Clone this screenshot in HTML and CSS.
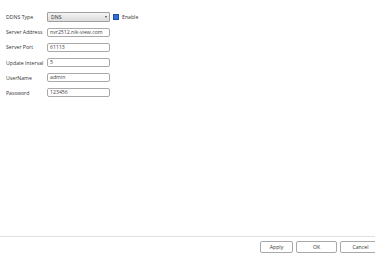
FILE: index.html
```html
<!DOCTYPE html>
<html lang="en">
<head>
    <meta charset="UTF-8">
    <title>DDNS</title>
    <link rel="stylesheet" href="styles.css">
</head>
<body>
    <div class="page">
        <div class="form">
            <div class="row">
                <label class="label">DDNS Type</label>
                <div class="select">
                    <span>DNS</span>
                    <span class="arrow"></span>
                </div>
                <span class="check"></span>
                <span class="check-text">Enable</span>
            </div>
            <div class="row">
                <label class="label">Server Address</label>
                <div class="input">nvr2512.nik-view.com</div>
            </div>
            <div class="row">
                <label class="label">Server Port</label>
                <div class="input">61113</div>
            </div>
            <div class="row">
                <label class="label">Update Interval</label>
                <div class="input">5</div>
            </div>
            <div class="row">
                <label class="label">UserName</label>
                <div class="input">admin</div>
            </div>
            <div class="row">
                <label class="label">Password</label>
                <div class="input">123456</div>
            </div>
        </div>

        <div class="footer">
            <div class="btn apply">Apply</div>
            <div class="btn ok">OK</div>
            <div class="btn cancel">Cancel</div>
        </div>
    </div>
</body>
</html>
```

FILE: styles.css
```css
*{
    padding: 0;
    margin: 0;
    box-sizing: border-box;
}
html, body{
    width: 375px;
    height: 258px;
    overflow: hidden;
    background-color: #fff;
}
body{
    font-family: "Open Sans", "Liberation Sans", Arial, sans-serif;
    font-size: 5.2px;
    color: #333;
}
.page{
    height: 258px;
    display: flex;
    flex-direction: column;
}
/* 表单区 */
.form{
    flex: 1;
    padding: 12px 0 0 6px;
    display: flex;
    flex-direction: column;
    gap: 5.2px;
}
.row{
    height: 10px;
    display: flex;
    align-items: center;
}
.label{
    width: 41px;
    white-space: nowrap;
}
.input{
    width: 63px;
    height: 9px;
    border: 1px solid #a9a9a9;
    border-radius: 2px;
    padding-left: 2px;
    line-height: 7px;
    color: #444;
}
.select{
    width: 63px;
    height: 10px;
    border: 1px solid #a0a0a0;
    border-radius: 1px;
    background: linear-gradient(#f4f4f4, #dcdcdc);
    display: flex;
    align-items: center;
    justify-content: space-between;
    padding: 0 2px 0 3px;
}
.arrow{
    width: 0;
    height: 0;
    border-left: 1.5px solid transparent;
    border-right: 1.5px solid transparent;
    border-top: 2px solid #444;
}
.check{
    width: 6px;
    height: 6px;
    margin-left: 3px;
    background-color: #2f6fd6;
    border: 1px solid #1d4fa8;
}
.check-text{
    margin-left: 3px;
}
/* 底部按钮区 */
.footer{
    height: 22px;
    border-top: 1px solid #e0e0e0;
    display: flex;
    justify-content: flex-end;
    align-items: flex-start;
    padding-top: 4px;
    gap: 3px;
    margin-right: -6px;
}
.btn{
    height: 12px;
    border: 1px solid #a9a9a9;
    border-radius: 2px;
    background-color: #fff;
    text-align: center;
    line-height: 10px;
    color: #333;
}
.apply{
    width: 33px;
}
.ok{
    width: 41px;
}
.cancel{
    width: 41px;
}
```
